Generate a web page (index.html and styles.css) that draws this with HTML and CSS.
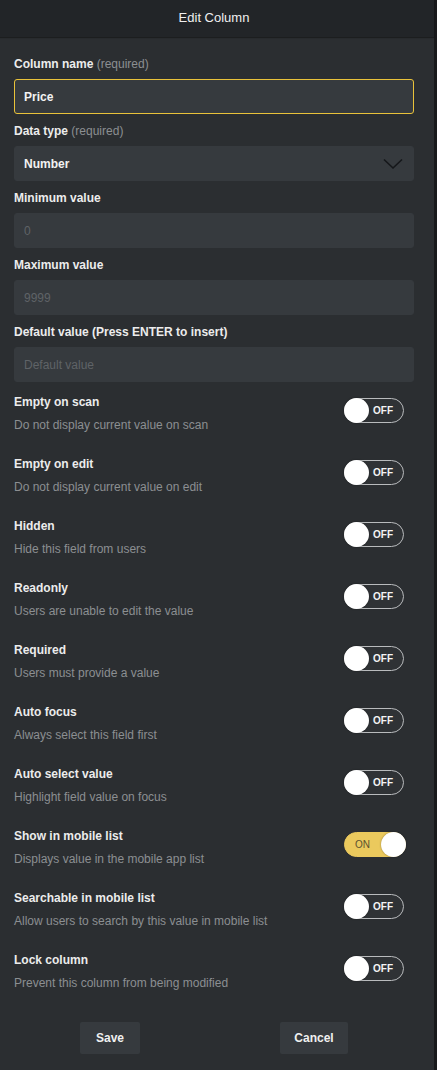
FILE: index.html
```html
<!DOCTYPE html>
<html lang="en">
<head>
    <meta charset="UTF-8">
    <meta name="viewport" content="width=device-width, initial-scale=1.0">
    <title>Edit Column</title>
    <link rel="stylesheet" href="styles.css">
</head>
<body>

<div class="panel">
    <div class="panel-header">Edit Column</div>

    <div class="panel-body">
        <div class="field">
            <label class="field-label">Column name <span class="muted">(required)</span></label>
            <input type="text" class="field-input active" value="Price">
        </div>

        <div class="field">
            <label class="field-label">Data type <span class="muted">(required)</span></label>
            <div class="field-input select">
                <span>Number</span>
                <svg class="chevron" width="20" height="12" viewBox="0 0 20 12">
                    <path d="M1 1.5 L10 10 L19 1.5" fill="none" stroke="#15171a" stroke-width="1.6"/>
                </svg>
            </div>
        </div>

        <div class="field">
            <label class="field-label">Minimum value</label>
            <input type="text" class="field-input" placeholder="0">
        </div>

        <div class="field">
            <label class="field-label">Maximum value</label>
            <input type="text" class="field-input" placeholder="9999">
        </div>

        <div class="field">
            <label class="field-label">Default value (Press ENTER to insert)</label>
            <input type="text" class="field-input" placeholder="Default value">
        </div>

        <div class="options">
            <div class="option">
                <div class="option-text">
                    <div class="option-title">Empty on scan</div>
                    <div class="option-desc">Do not display current value on scan</div>
                </div>
                <div class="toggle"><span class="knob"></span><span class="toggle-label">OFF</span></div>
            </div>
            <div class="option">
                <div class="option-text">
                    <div class="option-title">Empty on edit</div>
                    <div class="option-desc">Do not display current value on edit</div>
                </div>
                <div class="toggle"><span class="knob"></span><span class="toggle-label">OFF</span></div>
            </div>
            <div class="option">
                <div class="option-text">
                    <div class="option-title">Hidden</div>
                    <div class="option-desc">Hide this field from users</div>
                </div>
                <div class="toggle"><span class="knob"></span><span class="toggle-label">OFF</span></div>
            </div>
            <div class="option">
                <div class="option-text">
                    <div class="option-title">Readonly</div>
                    <div class="option-desc">Users are unable to edit the value</div>
                </div>
                <div class="toggle"><span class="knob"></span><span class="toggle-label">OFF</span></div>
            </div>
            <div class="option">
                <div class="option-text">
                    <div class="option-title">Required</div>
                    <div class="option-desc">Users must provide a value</div>
                </div>
                <div class="toggle"><span class="knob"></span><span class="toggle-label">OFF</span></div>
            </div>
            <div class="option">
                <div class="option-text">
                    <div class="option-title">Auto focus</div>
                    <div class="option-desc">Always select this field first</div>
                </div>
                <div class="toggle"><span class="knob"></span><span class="toggle-label">OFF</span></div>
            </div>
            <div class="option">
                <div class="option-text">
                    <div class="option-title">Auto select value</div>
                    <div class="option-desc">Highlight field value on focus</div>
                </div>
                <div class="toggle"><span class="knob"></span><span class="toggle-label">OFF</span></div>
            </div>
            <div class="option">
                <div class="option-text">
                    <div class="option-title">Show in mobile list</div>
                    <div class="option-desc">Displays value in the mobile app list</div>
                </div>
                <div class="toggle on"><span class="toggle-label">ON</span><span class="knob"></span></div>
            </div>
            <div class="option">
                <div class="option-text">
                    <div class="option-title">Searchable in mobile list</div>
                    <div class="option-desc">Allow users to search by this value in mobile list</div>
                </div>
                <div class="toggle"><span class="knob"></span><span class="toggle-label">OFF</span></div>
            </div>
            <div class="option">
                <div class="option-text">
                    <div class="option-title">Lock column</div>
                    <div class="option-desc">Prevent this column from being modified</div>
                </div>
                <div class="toggle"><span class="knob"></span><span class="toggle-label">OFF</span></div>
            </div>
        </div>

        <div class="actions">
            <button class="btn btn-save">Save</button>
            <button class="btn btn-cancel">Cancel</button>
        </div>
    </div>
</div>

</body>
</html>
```

FILE: styles.css
```css
body {
    margin: 0;
    background-color: #18191b;
    font-family: "Liberation Sans", Arial, sans-serif;
    font-size: 12px;
    color: #ececec;
}

.panel {
    width: 434px;
    min-height: 1070px;
    background-color: #2b2e31;
}

.panel-header {
    height: 37px;
    line-height: 35px;
    padding-right: 6px;
    text-align: center;
    font-size: 13px;
    color: #f0f0f0;
    background-color: #222528;
    box-shadow: 0 1px 1px rgba(0, 0, 0, 0.35);
}

.panel-body {
    padding: 18px 20px 16px 14px;
}

.field {
    margin-bottom: 8px;
}

.field-label {
    display: block;
    height: 18px;
    line-height: 18px;
    font-weight: bold;
    margin-bottom: 6px;
}

.muted {
    font-weight: normal;
    color: #8c8f92;
}

.field-input {
    display: block;
    box-sizing: border-box;
    width: 100%;
    height: 35px;
    padding: 0 9px;
    border: 1px solid #363a3e;
    border-radius: 3px;
    background-color: #363a3e;
    color: #f2f2f2;
    font-family: "Liberation Sans", Arial, sans-serif;
    font-size: 12px;
    font-weight: bold;
    outline: none;
}

.field-input::placeholder {
    color: #5f6367;
    font-weight: normal;
}

.field-input.active {
    border-color: #e9c23a;
}

.select {
    display: flex;
    align-items: center;
    justify-content: space-between;
    padding-right: 10px;
}

.chevron {
    display: block;
    margin-top: 1px;
}

.options {
    margin-top: 11px;
}

.option {
    display: flex;
    justify-content: space-between;
    align-items: flex-start;
    height: 40px;
    margin-bottom: 22px;
}

.option-title {
    height: 18px;
    line-height: 18px;
    font-weight: bold;
}

.option-desc {
    margin-top: 6px;
    height: 16px;
    line-height: 16px;
    color: #8c8f92;
}

.toggle {
    box-sizing: border-box;
    display: flex;
    align-items: center;
    justify-content: space-between;
    width: 60px;
    height: 25px;
    margin-top: 5px;
    margin-right: 10px;
    border: 1px solid #b9bbbd;
    border-radius: 13px;
    background-color: #2f3235;
}

.knob {
    width: 25px;
    height: 25px;
    margin: -1px;
    border-radius: 50%;
    background-color: #ffffff;
    box-shadow: 0 0 2px rgba(0, 0, 0, 0.4);
}

.toggle-label {
    padding-right: 10px;
    font-size: 10px;
    font-weight: bold;
    color: #f4f4f4;
}

.toggle.on {
    width: 62px;
    margin-right: 8px;
    border-color: #ebc95d;
    background-color: #ebc95d;
}

.toggle.on .toggle-label {
    padding-left: 10px;
    padding-right: 0;
    font-weight: normal;
    color: #5b512f;
}

.actions {
    display: flex;
    justify-content: space-between;
    padding: 9px 66px 0 66px;
}

.btn {
    height: 32px;
    border: none;
    border-radius: 2px;
    background-color: #363a3e;
    color: #f0f0f0;
    font-family: "Liberation Sans", Arial, sans-serif;
    font-size: 12px;
    font-weight: bold;
}

.btn-save {
    width: 60px;
}

.btn-cancel {
    width: 68px;
}
```
